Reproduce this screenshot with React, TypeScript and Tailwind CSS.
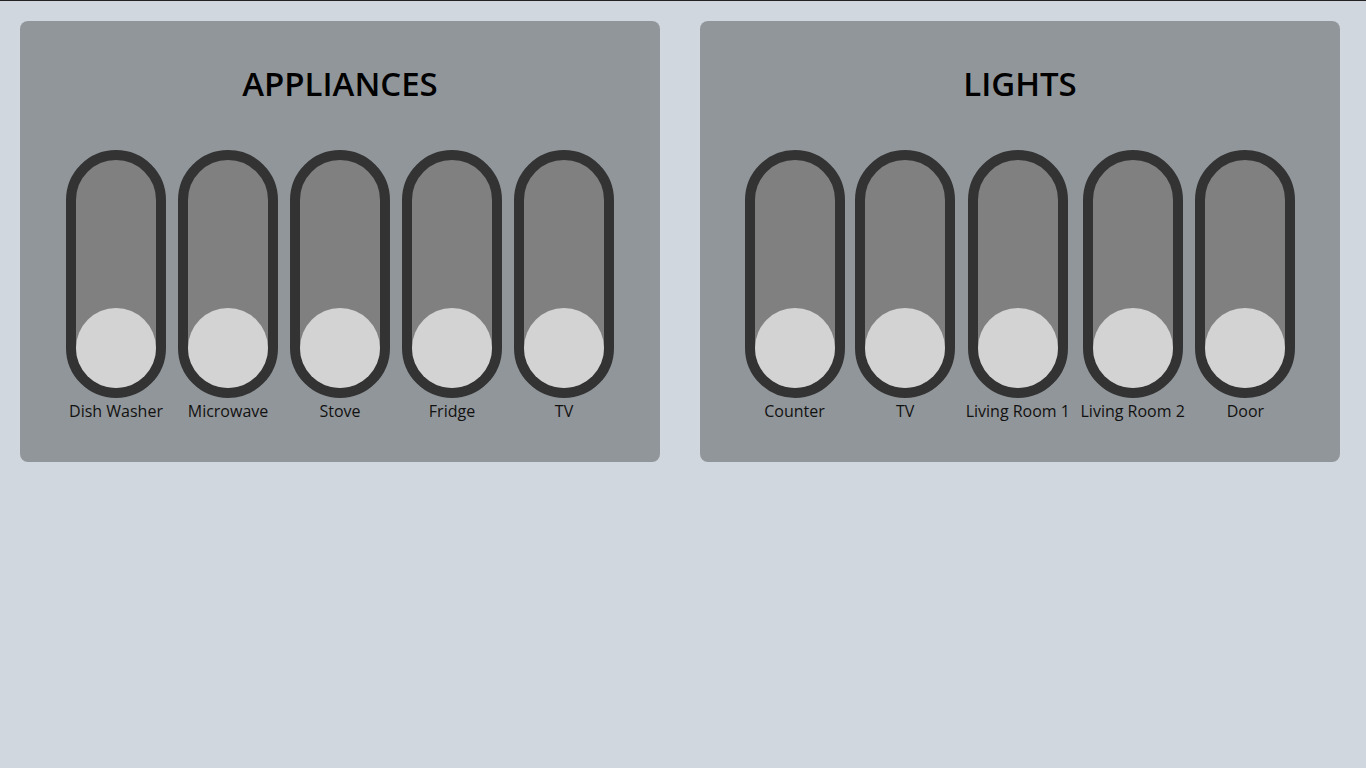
import { useState } from 'react';

interface Device {
    id: string;
    label: string;
}

const appliances: Device[] = [
    { id: 'dishwasher', label: 'Dish Washer' },
    { id: 'microwave', label: 'Microwave' },
    { id: 'stove', label: 'Stove' },
    { id: 'fridge', label: 'Fridge' },
    { id: 'tv', label: 'TV' },
];

const lights: Device[] = [
    { id: 'counter', label: 'Counter' },
    { id: 'tv', label: 'TV' },
    { id: 'living1', label: 'Living Room 1' },
    { id: 'living2', label: 'Living Room 2' },
    { id: 'door', label: 'Door' },
];

const Toggle = ({ label }: { label: string }) => {
    const [on, setOn] = useState(false);

    return (
        <div className="flex flex-col items-center">
            <button
                type="button"
                onClick={() => setOn(!on)}
                className={`flex h-[248px] w-[100px] flex-col rounded-full border-[10px] border-[#333333] bg-[#808080] ${
                    on ? 'justify-start' : 'justify-end'
                }`}
            >
                <span className="block h-[80px] w-[80px] rounded-full bg-[#d3d3d3]" />
            </button>
            <span className="pt-px text-base leading-6 whitespace-nowrap text-[#111]">{label}</span>
        </div>
    );
};

const Panel = ({ title, devices }: { title: string; devices: Device[] }) => (
    <section className="w-[640px] shrink-0 rounded-lg bg-[#91969a] px-[34px] pt-[43px] pb-[39px]">
        <h2 className="text-center text-[33px] leading-10 font-semibold text-black">{title}</h2>
        <div className="mt-[46px] flex justify-evenly">
            {devices.map((d) => (
                <Toggle key={d.id} label={d.label} />
            ))}
        </div>
    </section>
);

export default function App() {
    return (
        <div
            className="min-h-[768px] border-t border-[#222] bg-[#d0d7de]"
            style={{ fontFamily: '"Open Sans", sans-serif' }}
        >
            <div className="flex gap-10 p-5">
                <Panel title="APPLIANCES" devices={appliances} />
                <Panel title="LIGHTS" devices={lights} />
            </div>
        </div>
    );
}
